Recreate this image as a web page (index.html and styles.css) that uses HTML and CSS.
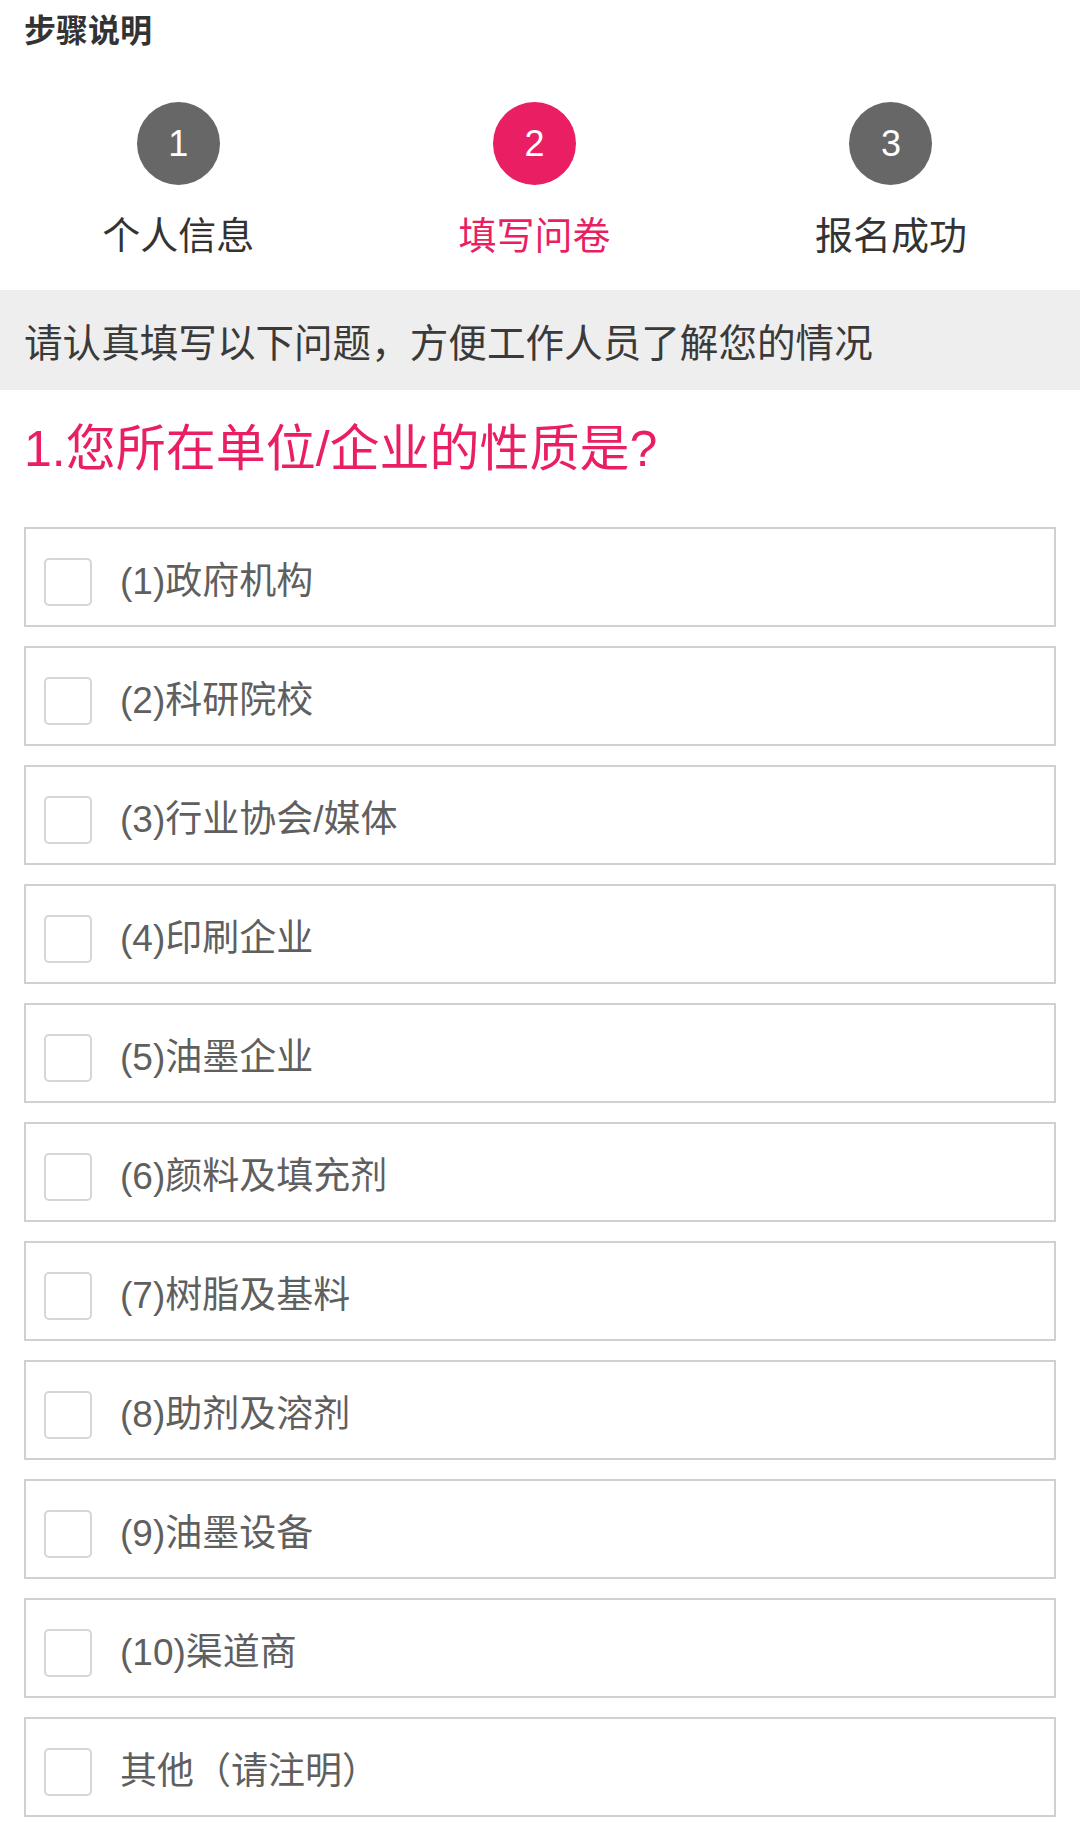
FILE: index.html
```html
<!DOCTYPE html>
<html lang="zh-CN">
<head>
<meta charset="utf-8">
<title>填写问卷</title>
<link rel="stylesheet" href="styles.css">
</head>
<body>
  <h1 class="page-title">步骤说明</h1>
  <div class="steps">
    <div class="step">
      <div class="step-num">1</div>
      <div class="step-label">个人信息</div>
    </div>
    <div class="step active">
      <div class="step-num">2</div>
      <div class="step-label">填写问卷</div>
    </div>
    <div class="step">
      <div class="step-num">3</div>
      <div class="step-label">报名成功</div>
    </div>
  </div>
  <div class="notice">请认真填写以下问题，方便工作人员了解您的情况</div>
  <h2 class="question">1.您所在单位/企业的性质是?</h2>
  <ul class="options">
    <li class="option"><span class="check"></span><span class="opt-text">(1)政府机构</span></li>
    <li class="option"><span class="check"></span><span class="opt-text">(2)科研院校</span></li>
    <li class="option"><span class="check"></span><span class="opt-text">(3)行业协会/媒体</span></li>
    <li class="option"><span class="check"></span><span class="opt-text">(4)印刷企业</span></li>
    <li class="option"><span class="check"></span><span class="opt-text">(5)油墨企业</span></li>
    <li class="option"><span class="check"></span><span class="opt-text">(6)颜料及填充剂</span></li>
    <li class="option"><span class="check"></span><span class="opt-text">(7)树脂及基料</span></li>
    <li class="option"><span class="check"></span><span class="opt-text">(8)助剂及溶剂</span></li>
    <li class="option"><span class="check"></span><span class="opt-text">(9)油墨设备</span></li>
    <li class="option"><span class="check"></span><span class="opt-text">(10)渠道商</span></li>
    <li class="option"><span class="check"></span><span class="opt-text">其他（请注明）</span></li>
  </ul>
</body>
</html>
```

FILE: styles.css
```css
* { box-sizing: border-box; }
html, body { margin: 0; padding: 0; background: #fff; }
body {
  font-family: "Liberation Sans", "Noto Sans CJK SC", sans-serif;
  color: #333;
}
.page-title {
  margin: 0;
  padding: 13px 24px 0;
  font-size: 32px;
  line-height: 36px;
  font-weight: 700;
  color: #333;
}
.steps {
  display: flex;
  padding: 53px 0 32px;
}
.step {
  width: 33%;
  display: flex;
  flex-direction: column;
  align-items: center;
}
.step-num {
  width: 83px;
  height: 83px;
  border-radius: 50%;
  background: #676767;
  color: #fff;
  font-size: 36px;
  line-height: 83px;
  text-align: center;
}
.step-label {
  margin-top: 29px;
  font-size: 38px;
  line-height: 44px;
  color: #333;
}
.step.active .step-num { background: #e91e63; }
.step.active .step-label { color: #e91e63; }
.notice {
  height: 100px;
  background: #eeeeee;
  padding-left: 24px;
  display: flex;
  align-items: center;
  font-size: 38.6px;
  color: #3a3a3a;
}
.question {
  margin: 29px 24px 0;
  font-size: 50px;
  line-height: 60px;
  font-weight: 400;
  color: #e91e63;
}
.options {
  list-style: none;
  margin: 48px 24px 0;
  padding: 0;
  display: flex;
  flex-direction: column;
  gap: 19px;
}
.option {
  height: 100px;
  border: 2px solid #d0d0d0;
  padding: 9px 0 0 18px;
  display: flex;
  align-items: center;
}
.check {
  width: 48px;
  height: 48px;
  border: 2px solid #d6d6d6;
  border-radius: 5px;
  flex: none;
}
.opt-text {
  margin-left: 28px;
  font-size: 37px;
  line-height: 44px;
  color: #5f5f5f;
}
```
